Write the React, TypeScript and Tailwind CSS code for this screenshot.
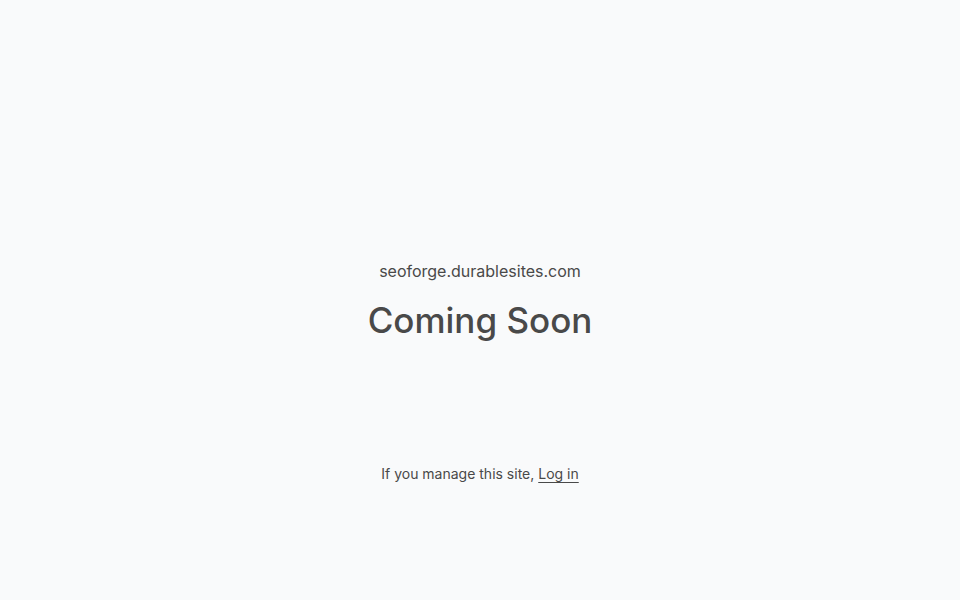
import React from 'react';

export default function App() {
  return (
    <div
      className="min-h-screen w-full bg-[#f9fafb] text-[#494949] flex flex-col items-center"
      style={{ fontFamily: 'Inter, "Noto Sans", sans-serif' }}
    >
      {/* Domain + headline */}
      <div className="pt-[259px] flex flex-col items-center">
        <p className="text-base leading-6">seoforge.durablesites.com</p>
        <h1 className="mt-[17px] text-[35px] leading-10 font-medium">Coming Soon</h1>
      </div>

      {/* Owner login hint */}
      <p className="mt-[124px] text-sm leading-5">
        If you manage this site,{' '}
        <a href="#" className="underline underline-offset-[3px]">
          Log in
        </a>
      </p>
    </div>
  );
}
